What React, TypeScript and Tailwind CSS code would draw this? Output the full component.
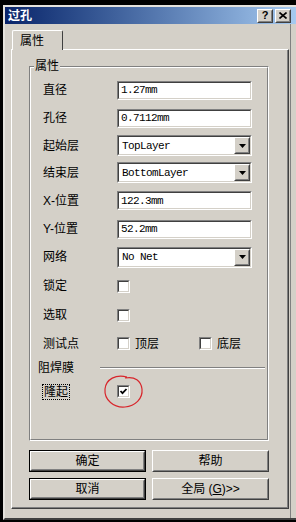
import React from "react";

const mono = "font-['Liberation_Mono','Noto_Sans_CJK_SC',monospace]";

type Kids = { className?: string; children?: React.ReactNode };

// classic sunken field (inputs, checkboxes)
function Sunken({ className = "", children }: Kids) {
  return (
    <div className={`border border-t-[#808080] border-l-[#808080] border-r-white border-b-white ${className}`}>
      <div className="flex h-full w-full items-center border border-t-[#404040] border-l-[#404040] border-r-[#d4d0c8] border-b-[#d4d0c8] bg-white">
        {children}
      </div>
    </div>
  );
}

// classic raised 3d button face
function Raised({ className = "", children }: Kids) {
  return (
    <div className={`border border-t-white border-l-white border-r-[#404040] border-b-[#404040] ${className}`}>
      <div className="flex h-full w-full items-center justify-center border border-t-[#d4d0c8] border-l-[#d4d0c8] border-r-[#808080] border-b-[#808080] bg-[#d4d0c8]">
        {children}
      </div>
    </div>
  );
}

function TextField({ value }: { value: string }) {
  return (
    <Sunken className="h-[19px] w-[135px]">
      <span className={`${mono} pl-[2px] text-[11px] tracking-[-0.6px] text-black`}>{value}</span>
    </Sunken>
  );
}

function Select({ value }: { value: string }) {
  return (
    <Sunken className="h-[21px] w-[135px]">
      <span className={`${mono} flex-1 pl-[3px] text-[11px] tracking-[-0.6px] text-black`}>{value}</span>
      <Raised className="h-[17px] w-[16px]">
        <svg width="7" height="4" viewBox="0 0 7 4">
          <path d="M0 0h7L3.5 4z" fill="black" />
        </svg>
      </Raised>
    </Sunken>
  );
}

function Check({ checked = false }: { checked?: boolean }) {
  return (
    <Sunken className="h-[13px] w-[13px] shrink-0">
      {checked && (
        <svg width="9" height="9" viewBox="0 0 9 9" className="block">
          <path d="M1.5 4 L3.5 6.2 L7.5 2" stroke="black" strokeWidth="1.8" fill="none" />
        </svg>
      )}
    </Sunken>
  );
}

function Btn({ label, isDefault = false }: { label: React.ReactNode; isDefault?: boolean }) {
  if (isDefault) {
    return (
      <div className="h-[22px] w-[117px] border border-black">
        <Raised className="h-full w-full">{label}</Raised>
      </div>
    );
  }
  return <Raised className="h-[22px] w-[117px]">{label}</Raised>;
}

function Row({ h, label, children }: { h: string; label: React.ReactNode; children?: React.ReactNode }) {
  return (
    <div className={`flex items-center ${h}`}>
      <div className="w-[74px] text-[12px] text-black">{label}</div>
      {children}
    </div>
  );
}

export default function App() {
  return (
    <div className="h-[522px] w-[296px] overflow-hidden bg-black pl-[3px] pt-[5px] font-['Liberation_Sans','Noto_Sans_CJK_SC',sans-serif]">
      <div className="flex h-[515px] w-[293px] flex-col border-l-2 border-t-2 border-b-2 border-l-[#e4e2dc] border-t-[#e4e2dc] border-b-[#404040] bg-[#d4d0c8]">
        {/* title bar */}
        <div className="flex h-[18px] items-center justify-between bg-linear-to-r from-[#0a246a] to-[#a6caf0] pl-[3px] pr-[5px]">
          <span className="text-[12px] font-bold leading-none text-white">过孔</span>
          <div className="flex gap-[2px]">
            <Raised className="h-[14px] w-[16px]">
              <span className="text-[11px] font-bold leading-none text-black">?</span>
            </Raised>
            <Raised className="h-[14px] w-[16px]">
              <svg width="8" height="7" viewBox="0 0 8 7">
                <path d="M0.5 0.5L7.5 6.5M7.5 0.5L0.5 6.5" stroke="black" strokeWidth="1.6" />
              </svg>
            </Raised>
          </div>
        </div>

        {/* body */}
        <div className="flex h-full w-[286px] flex-col border-r border-r-[#808080]">
          <div className="relative z-10 -mb-px ml-[7px] mt-[6px] flex h-[20px] w-[51px] items-center rounded-t-[2px] border-l border-t border-r border-l-white border-t-white border-r-[#404040] bg-[#d4d0c8] pl-[7px] text-[12px] text-black">
            属性
          </div>

          <div className="ml-[6px] h-[460px] w-[278px] border border-t-white border-l-white border-r-[#404040] border-b-[#404040]">
            <div className="h-full w-full border-r border-b border-r-[#808080] border-b-[#808080] pl-[17px] pt-[16px]">
              {/* group box */}
              <div className="relative h-[375px] w-[240px] border border-t-[#808080] border-l-[#808080] border-r-white border-b-white">
                <span className="absolute left-[4px] top-[-8px] bg-[#d4d0c8] px-[1px] text-[12px] leading-[14px] text-black">属性</span>
                <div className="h-full w-full border border-t-white border-l-white border-r-[#808080] border-b-[#808080] pl-[12px] pt-[8px]">
                  <Row h="h-[28px]" label="直径"><TextField value="1.27mm" /></Row>
                  <Row h="h-[28px]" label="孔径"><TextField value="0.7112mm" /></Row>
                  <Row h="h-[27px]" label="起始层"><Select value="TopLayer" /></Row>
                  <Row h="h-[27px]" label="结束层"><Select value="BottomLayer" /></Row>
                  <Row h="h-[29px]" label="X-位置"><TextField value="122.3mm" /></Row>
                  <Row h="h-[28px]" label="Y-位置"><TextField value="52.2mm" /></Row>
                  <Row h="h-[28px]" label="网络"><Select value="No Net" /></Row>
                  <Row h="h-[30px]" label="锁定"><Check /></Row>
                  <Row h="h-[28px]" label="选取"><Check /></Row>
                  <Row h="h-[29px]" label="测试点">
                    <Check />
                    <span className="ml-[5px] w-[64px] text-[12px] text-black">顶层</span>
                    <Check />
                    <span className="ml-[5px] text-[12px] text-black">底层</span>
                  </Row>
                  <div className="-ml-[5px] flex h-[20px] items-center">
                    <span className="w-[62px] text-[12px] text-black">阻焊膜</span>
                    <div className="h-[2px] w-[165px] border-t border-b border-t-[#808080] border-b-white" />
                  </div>
                  <div className="flex h-[26px] items-center">
                    <div className="w-[74px]">
                      <span className="-ml-px inline-block border border-dotted border-black px-[1px] text-[12px] leading-[14px] text-black">隆起</span>
                    </div>
                    <div className="relative">
                      <Check checked />
                      <svg className="absolute left-[-15px] top-[-11px]" width="44" height="36" viewBox="0 0 44 36">
                        <path
                          d="M25 3 C14 0 4 5 3 15 C2 26 12 34 23 33 C33 32 41 25 40 15 C39 7 33 2 23 4"
                          stroke="#d8262c"
                          strokeWidth="1.2"
                          fill="none"
                        />
                      </svg>
                    </div>
                  </div>
                </div>
              </div>

              {/* buttons */}
              <div className="mt-[9px] grid w-[240px] grid-cols-2 gap-x-[6px] gap-y-[6px] text-[12px] text-black">
                <Btn label="确定" isDefault />
                <Btn label="帮助" />
                <Btn label="取消" isDefault />
                <Btn
                  label={
                    <span>
                      全局 (<span className="underline">G</span>)&gt;&gt;
                    </span>
                  }
                />
              </div>
            </div>
          </div>
        </div>
      </div>
    </div>
  );
}
